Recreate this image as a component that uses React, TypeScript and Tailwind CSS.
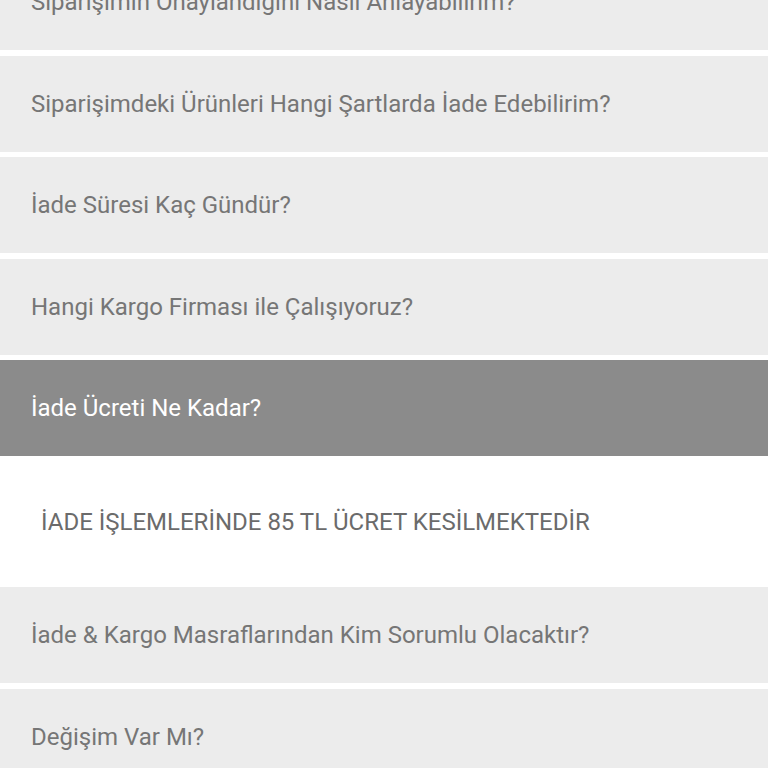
import React from "react";

const items = [
  "Siparişimin Onaylandığını Nasıl Anlayabilirim?",
  "Siparişimdeki Ürünleri Hangi Şartlarda İade Edebilirim?",
  "İade Süresi Kaç Gündür?",
  "Hangi Kargo Firması ile Çalışıyoruz?",
];

const after = [
  "İade & Kargo Masraflarından Kim Sorumlu Olacaktır?",
  "Değişim Var Mı?",
];

function Row({ text }: { text: string }) {
  return (
    <div className="h-[96px] bg-[#ececec] flex items-center pl-[31px] text-[24px] text-[#767676]">
      {text}
    </div>
  );
}

export default function App() {
  return (
    <div
      className="w-[768px] h-[768px] overflow-hidden bg-white"
      style={{ fontFamily: "Roboto, 'Noto Sans', sans-serif" }}
    >
      <div className="-mt-[46px] flex flex-col">
        {items.map((t) => (
          <div key={t} className="mb-[5.5px]">
            <Row text={t} />
          </div>
        ))}
        <div className="h-[96px] bg-[#8b8b8b] flex items-center pl-[31px] text-[24px] text-white">
          İade Ücreti Ne Kadar?
        </div>
        <div className="h-[131px] bg-white flex items-center pl-[41px] text-[24px] text-[#6b6b6b]">
          İADE İŞLEMLERİNDE 85 TL ÜCRET KESİLMEKTEDİR
        </div>
        {after.map((t) => (
          <div key={t} className="mb-[5.5px]">
            <Row text={t} />
          </div>
        ))}
      </div>
    </div>
  );
}
